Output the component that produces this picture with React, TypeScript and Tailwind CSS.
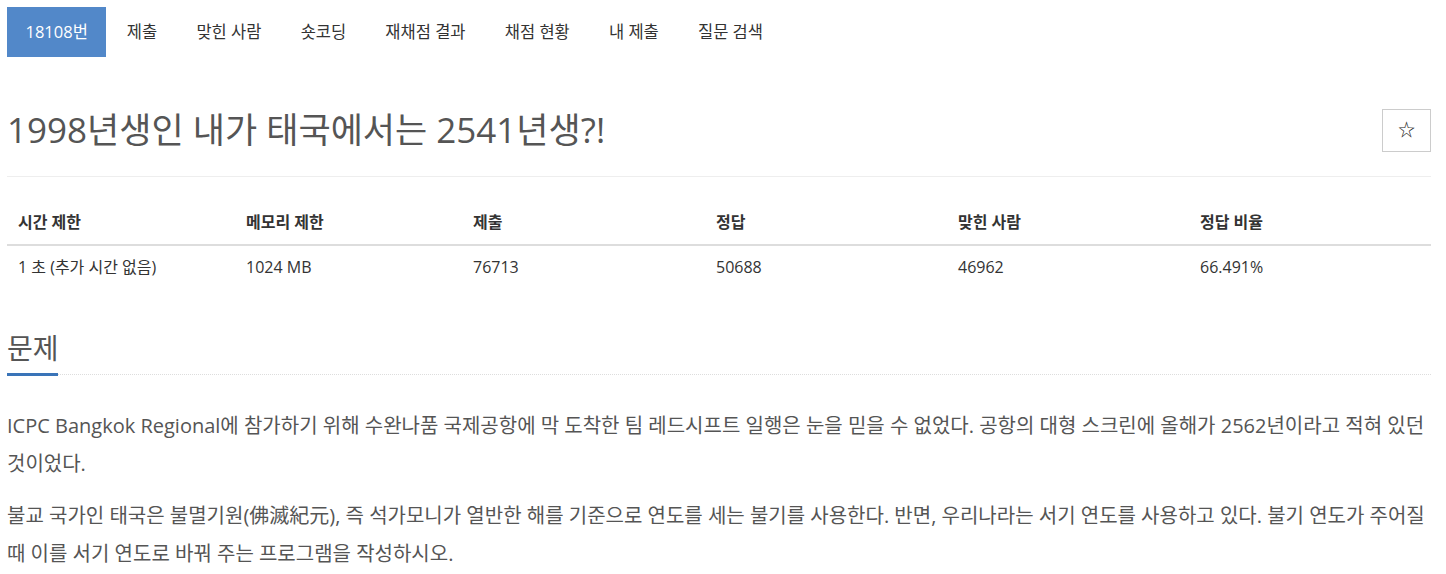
import React from "react";

const font = { fontFamily: '"Open Sans", "Noto Sans CJK KR", sans-serif' };

const tabs = ["제출", "맞힌 사람", "숏코딩", "재채점 결과", "채점 현황", "내 제출", "질문 검색"];

const heads = ["시간 제한", "메모리 제한", "제출", "정답", "맞힌 사람", "정답 비율"];
const cells = ["1 초 (추가 시간 없음)", "1024 MB", "76713", "50688", "46962", "66.491%"];

function App() {
  return (
    <div className="w-[1446px] min-h-[574px] bg-white text-[#333]" style={font}>
      <div className="px-[7px] pt-[7px] w-[1438px]">
        {/* tabs */}
        <ul className="flex text-[16.5px] text-[#333]">
          <li className="h-[50px] px-[18.5px] flex items-center bg-[#5288c9] text-white">18108번</li>
          {tabs.map((t, i) => (
            <li key={t} className={i === 0 ? "h-[50px] pl-[20.5px] pr-[19.6px] flex items-center" : "h-[50px] px-[19.6px] flex items-center"}>
              {t}
            </li>
          ))}
        </ul>

        {/* title */}
        <div className="mt-[47px] pb-[20px] border-b border-[#eee] flex items-center justify-between">
          <h1 className="text-[35px] text-[#555] leading-[52px]">1998년생인 내가 태국에서는 2541년생?!</h1>
          <button className="w-[49px] h-[43px] border border-[#ccc] flex items-center justify-center text-[17px] text-[#222]">
            ☆
          </button>
        </div>

        {/* info table */}
        <div className="mt-[25px] text-[16px] leading-[24px]">
          <div className="grid grid-cols-[228px_227px_243px_242px_242px_242px] border-b-2 border-[#ddd] font-bold">
            {heads.map((h) => (
              <div key={h} className="px-[11px] pt-[8px] pb-[10px]">{h}</div>
            ))}
          </div>
          <div className="grid grid-cols-[228px_227px_243px_242px_242px_242px]">
            {cells.map((c) => (
              <div key={c} className="px-[11px] py-[9px]">{c}</div>
            ))}
          </div>
        </div>

        {/* problem */}
        <div className="mt-[42px]">
          <div className="relative border-b border-dotted border-[#ddd] pb-[8px]">
            <h2 className="text-[28px] text-[#555] leading-[36px]">문제</h2>
            <div className="absolute left-0 bottom-[-2px] w-[51px] h-[3px] bg-[#3a74b8]" />
          </div>
          <div className="mt-[32px] text-[20px] text-[#555] leading-[38px]">
            <p className="mb-[14px]">
              ICPC Bangkok Regional에 참가하기 위해 수완나품 국제공항에 막 도착한 팀 레드시프트 일행은 눈을 믿을 수 없었다. 공항의 대형 스크린에 올해가 2562년이라고 적혀 있던 것이었다.
            </p>
            <p>
              불교 국가인 태국은 불멸기원(佛滅紀元), 즉 석가모니가 열반한 해를 기준으로 연도를 세는 불기를 사용한다. 반면, 우리나라는 서기 연도를 사용하고 있다. 불기 연도가 주어질 때 이를 서기 연도로 바꿔 주는 프로그램을 작성하시오.
            </p>
          </div>
        </div>
      </div>
    </div>
  );
}

export default App;
